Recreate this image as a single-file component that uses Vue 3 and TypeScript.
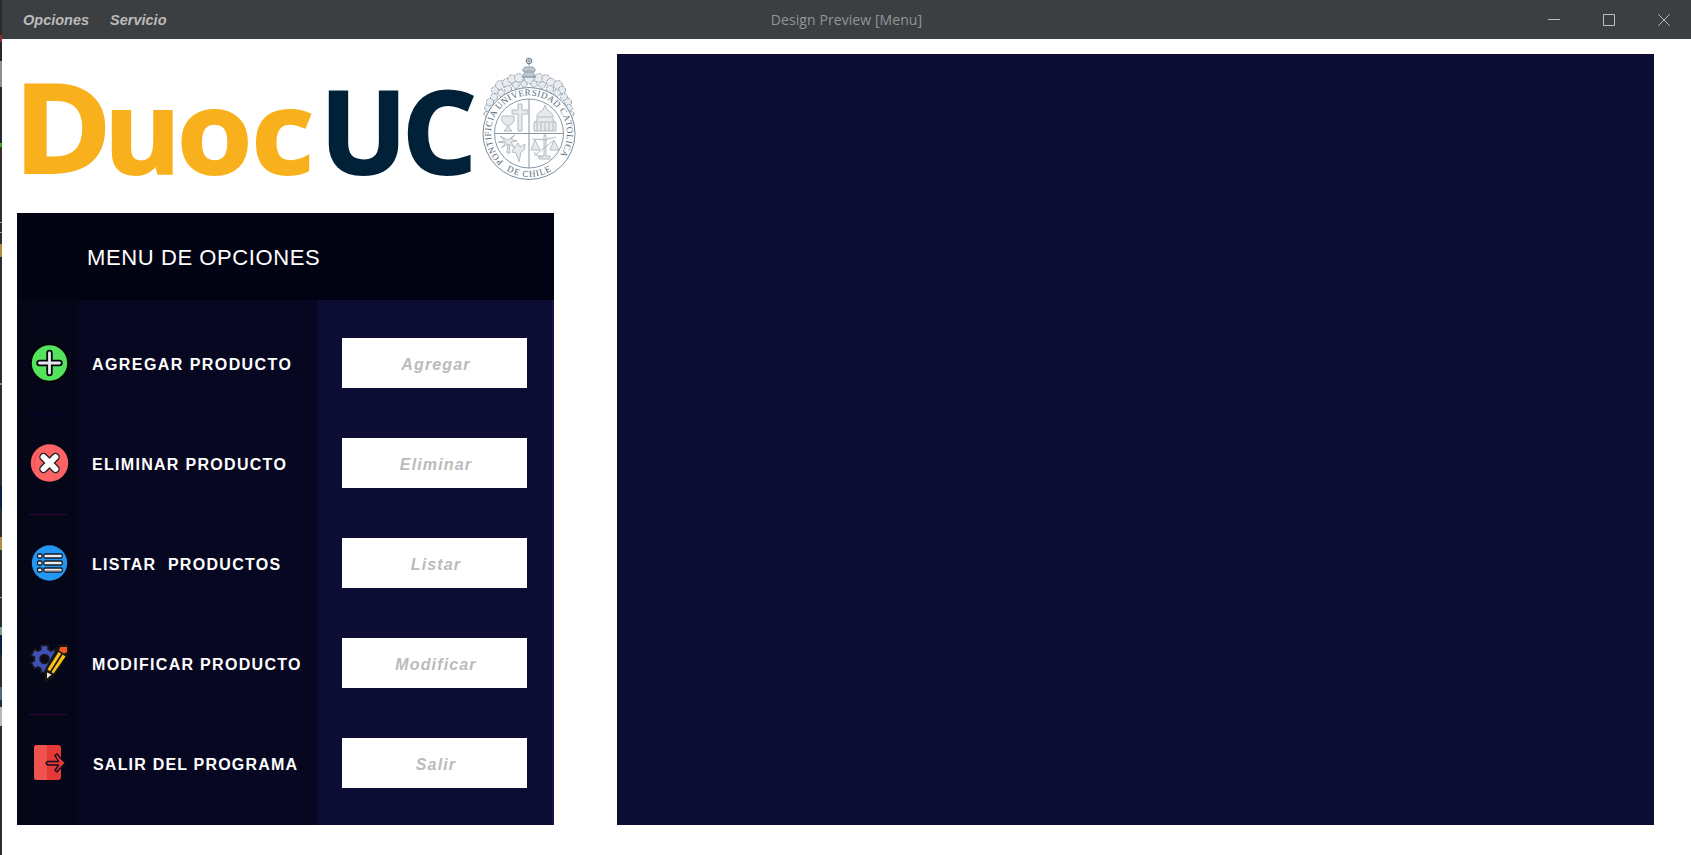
<script setup lang="ts">
interface MenuItem {
  id: string
  label: string
  action: string
  divider: string
}

const items: MenuItem[] = [
  { id: 'add', label: 'AGREGAR PRODUCTO', action: 'Agregar', divider: 'blue' },
  { id: 'remove', label: 'ELIMINAR PRODUCTO', action: 'Eliminar', divider: 'purple' },
  { id: 'list', label: 'LISTAR\u00a0 PRODUCTOS', action: 'Listar', divider: 'blue dim' },
  { id: 'edit', label: 'MODIFICAR PRODUCTO', action: 'Modificar', divider: 'purple' },
  { id: 'exit', label: 'SALIR DEL PROGRAMA', action: 'Salir', divider: 'none' },
]

// Ornaments along the crown's arc, as [x, y, radius]
const pearls: number[][] = [
  [14, 60, 3], [15, 54, 3.4], [17, 48, 3.6], [21, 43, 3.5], [22, 36, 3.6], [27, 31, 4.4], [34, 29, 4.6],
  [39, 25, 4.2], [46, 24, 4.4], [66, 24, 4.4], [73, 25, 4.2], [78, 29, 4.6], [85, 31, 4.4], [89, 36, 3.6],
  [91, 43, 3.5], [95, 48, 3.6], [96, 54, 3.4], [98, 60, 3], [28, 39, 3.4], [35, 35, 3.6], [43, 31, 3.4],
  [56, 25, 4.6], [51, 30, 3.2], [61, 30, 3.2], [69, 31, 3.4], [77, 35, 3.6], [84, 39, 3.4],
]
</script>

<template>
  <div class="window">
    <div class="edge"></div>
    <div class="frame">
      <header class="titlebar">
        <nav class="menubar"><span>Opciones</span><span>Servicio</span></nav>
        <span class="title">Design Preview [Menu]</span>
        <div class="controls">
          <svg width="12" height="12" viewBox="0 0 12 12"><path d="M0 5.500H12" /></svg>
          <svg width="12" height="12" viewBox="0 0 12 12"><path d="M.5 .5H11.5V11.5H.5Z" /></svg>
          <svg width="12" height="12" viewBox="0 0 12 12"><path d="M.3 .3L11.7 11.7M11.7 .3L.3 11.7" /></svg>
        </div>
      </header>

      <main class="content">
        <section class="left">
          <svg class="logo" width="572" height="159" viewBox="17 54 572 159">
            <g class="brand">
              <g class="duoc" font-size="123">
                <text transform="translate(13.500 173) scale(1.080 1)">D</text>
                <text transform="translate(104 173.500) scale(.950 .940)">u</text>
                <text transform="translate(177 173.500) scale(.990 .940)">o</text>
                <text transform="translate(251.500 173.500) scale(.990 .940)">c</text>
              </g>
              <g class="uc" font-size="114">
                <text transform="translate(320 173.500) scale(1.010 1)">U</text>
                <text transform="translate(402 173.500) scale(1.030 1)">C</text>
              </g>
            </g>
            <g class="seal" transform="translate(473 54)">
              <circle v-for="(p, i) in pearls" :key="i" class="pearl" :cx="p[0]" :cy="p[1]" :r="p[2]" />
              <path class="crown" d="M53 17h6l4 6H49ZM50 23h12M52 13c-3 2-3 5 0 5h8c3 0 3-3 0-5Z" />
              <circle class="orb" cx="56" cy="7" r="2.800" />
              <path class="line" d="M56 4V12M53.500 7h5" />
              <circle class="disc" cx="56" cy="79.500" r="46" />
              <circle class="ring" cx="56" cy="79.500" r="34.500" />
              <path class="line" d="M56 45V114M21.500 79.500H90.500" />
              <path id="seal-arc" d="M30.600 107.700A38 38 0 1 1 81.400 107.700" />
              <path id="seal-base" d="M31 114.900A43.300 43.300 0 0 0 81 114.900" />
              <text class="motto"><textPath href="#seal-arc" textLength="174" lengthAdjust="spacing">PONTIFICIA UNIVERSIDAD CATOLICA</textPath></text>
              <text class="motto"><textPath href="#seal-base" startOffset="3" textLength="47" lengthAdjust="spacing">DE CHILE</textPath></text>
              <path class="shade" d="M45 50h4v6h6v4h-6v17h-4V60h-6v-4h6ZM29 62h12c1 6-2 9-5 9v3l3 3h-8l3-3v-3c-4-1-6-4-5-9ZM61 77V69l3-3v-5c2-3 4-4 6-5l2-5 2 5c3 1 5 3 6 6v4l3 3v8ZM64 69v8M68 69v8M72 69v8M76 69v8M80 69v8M61 68h22M65 63h14" />
              <path class="shade" d="M71 81h2v21h4v3H66v-3h5ZM59 85l12 1 12-3M62 86l-4 10h9ZM81 86l-4 10h9ZM61 102L80 87M61 98c2 4 5 5 9 5M35 86l-8-4 5 5-7 1 8 1-5 5 7-4-1 9 3 0-1-9 6 4-4-6 6-1-6-2 4-4-6 4ZM41 94l4-5 2 4 5-3-1 6-3 2-2 10-3-9-4-1Z" />
            </g>
          </svg>

          <div class="panel">
            <h1 class="heading">MENU DE OPCIONES</h1>
            <div class="rows">
              <div v-for="item in items" :key="item.id" class="row" :class="item.id">
                <div class="icon">
                  <svg v-if="item.id === 'add'" width="42" height="42" viewBox="0 0 42 42">
                    <circle cx="20.500" cy="21" r="18.700" fill="#54e35d" stroke="#030608" stroke-width="2" />
                    <path d="M20.500 11V31M10.500 21H30.500" stroke="#05060b" stroke-width="6.400" stroke-linecap="round" />
                    <path d="M20.500 11V31M10.500 21H30.500" stroke="#e8e9ef" stroke-width="2.800" stroke-linecap="round" />
                  </svg>
                  <svg v-else-if="item.id === 'remove'" width="42" height="42" viewBox="0 0 42 42">
                    <circle cx="20.500" cy="21" r="18.700" fill="#fd6264" />
                    <path d="M7 12A18 18 0 0 0 8 32C5 25 5 18 10 9Z" fill="#e95458" />
                    <path d="M14.500 15L26.500 27M26.500 15L14.500 27" stroke="#292229" stroke-width="8.500" stroke-linecap="round" />
                    <path d="M14.500 15L26.500 27M26.500 15L14.500 27" stroke="#fff" stroke-width="5.800" stroke-linecap="round" />
                  </svg>
                  <svg v-else-if="item.id === 'list'" width="42" height="42" viewBox="0 0 42 42">
                    <circle cx="20.500" cy="21" r="17.700" fill="#2497f2" />
                    <g fill="#eee9ea" stroke="#121b27" stroke-width="1.300">
                      <rect x="8.500" y="12" width="4.500" height="4" rx="1.500" /><rect x="14.800" y="12" width="18.500" height="4" rx="1.500" />
                      <rect x="8.500" y="19" width="4.500" height="4" rx="1.500" /><rect x="14.800" y="19" width="18.500" height="4" rx="1.500" />
                      <rect x="8.500" y="26" width="4.500" height="4" rx="1.500" /><rect x="14.800" y="26" width="18.500" height="4" rx="1.500" />
                    </g>
                    <path d="M16 29h16" stroke="#857c87" stroke-width="1.200" />
                  </svg>
                  <svg v-else-if="item.id === 'edit'" width="42" height="42" viewBox="0 0 42 42">
                    <g transform="translate(15.500 17)">
                      <circle r="11.500" fill="#17171b" />
                      <path d="M0-14.500V14.500M-12.600-7.200L12.600 7.200M-12.600 7.200L12.600-7.200" stroke="#17171b" stroke-width="9" />
                      <circle r="9.500" fill="#3f51b5" />
                      <path d="M0-12.800V12.800M-11-6.400L11 6.400M-11 6.400L11-6.400" stroke="#3f51b5" stroke-width="5.500" />
                      <circle r="4.500" fill="#0c0c18" stroke="#17171b" stroke-width="1.500" />
                    </g>
                    <path d="M30 3.500h8l1 7-13 21-9 8-1-10Z" fill="#171717" stroke="#171717" stroke-width="2" stroke-linejoin="round" />
                    <path d="M29.500 10l7 4.500-12 17-6-4Z" fill="#ffc21b" />
                    <path d="M33 12L21.500 30" stroke="#171717" stroke-width="1.700" />
                    <path d="M31.500 5h6.500v5l-3 1.500-5-3Z" fill="#ff5722" />
                    <path d="M18 30.500l4.500 2-4.500 4Z" fill="#f3e7d0" />
                  </svg>
                  <svg v-else width="42" height="42" viewBox="0 0 42 42">
                    <rect x="5" y="3" width="27" height="35" rx="3" fill="#e53935" />
                    <path d="M8 3h10v35H8a3 3 0 0 1-3-3V6a3 3 0 0 1 3-3Z" fill="#ef5350" />
                    <path d="M26 13.500l2-1.500 7 8v2l-7 8-2-1.500 3.500-5.500H18.500L17 21l1.500-1.500h11Z" fill="#e53935" stroke="#160b20" stroke-width="1.400" stroke-linejoin="round" />
                    <path d="M31 17l4.500 4-4.500 4Z" fill="#e53935" />
                  </svg>
                  <i class="divider" :class="item.divider"></i>
                </div>
                <div class="label">{{ item.label }}</div>
                <div class="action"><button type="button">{{ item.action }}</button></div>
              </div>
            </div>
          </div>
        </section>
        <section class="canvas"></section>
      </main>
    </div>
  </div>
</template>

<style>
html, body { margin: 0; background: #fff; overflow: hidden; }
</style>

<style scoped>
* { box-sizing: border-box; }
.window { display: flex; width: 1691px; height: 855px; background: #fff; font-family: "Liberation Sans", Arial, sans-serif; }
.edge {
  width: 2px;
  background: linear-gradient(#2b2b2e 0 35px, #8e2c35 35px 42px, #24272b 42px 61px, #8e8e90 61px 87px, #252a2e 87px 143px, #39a61e 143px 147px, #3e2e2a 147px 162px, #263030 162px 222px, #9a9a9a 222px 223px, #293033 223px 232px, #9a9a9a 232px 233px, #293033 233px 244px, #b18e3f 244px 257px, #273030 257px 383px, #8a8d8e 383px 385px, #283033 385px 486px, #08233f 486px 508px, #273030 508px 537px, #b18e3f 537px 550px, #273030 550px 597px, #c48a91 597px 598px, #273030 598px 627px, #7e9b8b 627px 635px, #08233f 635px 655px, #273030 655px 687px, #536983 687px 700px, #273030 700px 707px, #b7b7b7 707px 726px, #273030 726px);
}
.frame { flex: 1; display: flex; flex-direction: column; }
.titlebar { display: grid; grid-template-columns: 1fr auto 1fr; align-items: center; height: 39px; padding: 0 21px; background: #3c3f41; }
.menubar { display: flex; gap: 21px; padding-top: 1px; font: italic bold 14.5px "Liberation Sans", Arial, sans-serif; color: #bbb; }
.title { font: 14px "Open Sans", "Noto Sans", sans-serif; letter-spacing: .08px; color: #929597; }
.controls { display: flex; justify-content: flex-end; gap: 43px; }
.controls svg { fill: none; stroke: #bcbec0; stroke-width: 1; }
.content { display: flex; padding: 15px 37px 0 15px; }
.left { width: 600px; }
.logo { display: block; overflow: visible; }
.brand { font-family: "Open Sans", "Noto Sans", sans-serif; font-weight: 700; stroke-width: 2; }
.duoc { fill: #f8b11c; stroke: #f8b11c; }
.uc { fill: #002138; stroke: #002138; }
.seal { fill: none; stroke: #6f8191; }
.pearl { fill: #e9ecef; stroke: #8393a1; stroke-width: .8; stroke-dasharray: 3 1; }
.crown { fill: #bfc7cf; stroke: #8090a0; stroke-width: .8; }
.orb { fill: #fff; stroke: #5d7083; }
.disc { fill: #fff; stroke: #7b8b9a; stroke-width: 1; }
.ring, .line { stroke: #7b8b9a; stroke-width: .9; }
#seal-arc, #seal-base { fill: none; stroke: none; }
.motto { font: 9px "Liberation Serif", serif; fill: #52677b; stroke: none; }
.shade { fill: #e6eaed; stroke: #aab5bf; stroke-width: .9; }
.panel { width: 537px; height: 612px; background: #0d0c33; }
.heading { height: 87px; margin: 0; padding-left: 70px; background: #010313; color: #fff; font-size: 22px; font-weight: 400; line-height: 89px; letter-spacing: .6px; }
.rows { height: 525px; padding-top: 13px; overflow: hidden; background: linear-gradient(90deg, #050618 0 61px, #070722 61px 300px, #0d0c33 300px 535px, #17134b 535px); }
.row { display: grid; grid-template-columns: 62px 238px 237px; height: 100px; }
.icon { display: flex; flex-direction: column; padding: 29px 0 0 12px; }
.icon svg { display: block; fill: none; }
.divider { width: 38px; height: 1px; margin-top: 30px; }
.blue { background: #070440; }
.dim { background: #06052d; }
.purple { background: #33043f; }
.none { background: none; }
.label { padding: 42px 0 0 13px; color: #fff; font-size: 16px; font-weight: 700; line-height: 20px; letter-spacing: 1.3px; white-space: nowrap; }
.add .label { letter-spacing: 1.43px; }
.exit .label { padding-left: 14px; letter-spacing: 1.2px; }
.action { padding: 25px 0 0 25px; }
button { display: block; width: 185px; height: 50px; padding: 3px 0 0 3px; border: 0; background: #fff; color: #bbb; font: italic bold 16px "Liberation Sans", Arial, sans-serif; letter-spacing: 1.15px; }
.canvas { width: 1037px; height: 771px; background: #0d0c33; }
</style>
